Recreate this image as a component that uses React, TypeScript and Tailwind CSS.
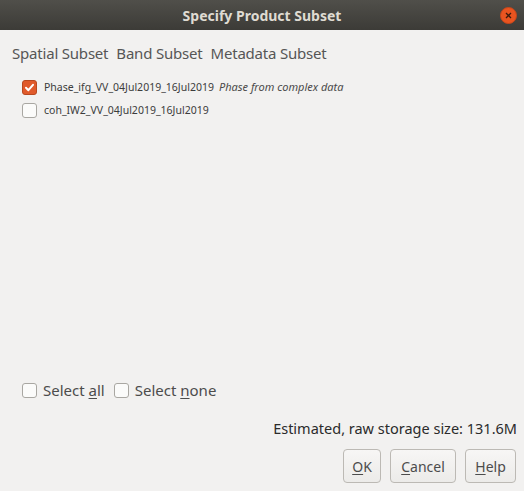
import React from "react";

const font = { fontFamily: '"Noto Sans", "Open Sans", sans-serif' };

function Check({ checked }: { checked?: boolean }) {
  if (checked) {
    return (
      <span className="w-[15px] h-[15px] rounded-[3px] bg-[#e05a2b] border border-[#b8481f] flex items-center justify-center shrink-0">
        <svg width="11" height="11" viewBox="0 0 11 11">
          <path d="M2 5.8 L4.4 8.2 L9 2.8" stroke="#fff" strokeWidth="2" fill="none" strokeLinecap="round" strokeLinejoin="round" />
        </svg>
      </span>
    );
  }
  return <span className="block w-[15px] h-[15px] rounded-[3px] bg-[#fbfbfa] border border-[#a9a7a2] shrink-0" />;
}

export default function App() {
  return (
    <div className="w-[524px] h-[491px] bg-[#f2f1f0] flex flex-col overflow-hidden" style={font}>
      <div className="h-[30px] bg-gradient-to-b from-[#504f4a] to-[#3c3b37] flex items-center justify-center relative shrink-0">
        <span className="text-[14px] font-bold text-[#dfdbd2]">Specify Product Subset</span>
        <span className="absolute right-[7px] top-[7px] w-[17px] h-[17px] rounded-full bg-[#e95420] border border-[#c7461a] flex items-center justify-center">
          <svg width="7" height="7" viewBox="0 0 7 7">
            <path d="M1 1 L6 6 M6 1 L1 6" stroke="#3c1a0c" strokeWidth="1.3" />
          </svg>
        </span>
      </div>
      <div className="flex gap-[8px] pl-[12px] pt-[13px] text-[15px] text-[#565656] leading-[20px] tracking-[-0.2px]">
        <span>Spatial Subset</span>
        <span>Band Subset</span>
        <span>Metadata Subset</span>
      </div>
      <div className="flex flex-col pl-[22px] pt-[17px] gap-[8px] text-[10.5px] text-[#3c3c3c]">
        <div className="flex items-center h-[15px]">
          <Check checked />
          <span className="ml-[7px]">Phase_ifg_VV_04Jul2019_16Jul2019</span>
          <span className="italic text-[#4a4a4a] ml-[5px] text-[11px]">Phase from complex data</span>
        </div>
        <div className="flex items-center h-[15px]">
          <Check />
          <span className="ml-[7px]">coh_IW2_VV_04Jul2019_16Jul2019</span>
        </div>
      </div>
      <div className="flex-1" />
      <div className="flex items-center pl-[22px] text-[15px] text-[#4c4c4c] h-[16px] mb-[20px]">
        <Check />
        <span className="ml-[6px]">Select <span className="underline underline-offset-2">a</span>ll</span>
        <span className="ml-[9px] flex"><Check /></span>
        <span className="ml-[6px]">Select <span className="underline underline-offset-2">n</span>one</span>
      </div>
      <div className="flex justify-end pr-[7px] text-[14.5px] text-[#2b2b2b] h-[20px] mb-[11px]">
        Estimated, raw storage size: 131.6M
      </div>
      <div className="flex justify-end gap-[9px] pr-[8px] mb-[8px] text-[14px] text-[#4c4c4c]">
        <button className="w-[38px] h-[34px] rounded-[4px] border border-[#bcb9b4] bg-gradient-to-b from-[#f7f6f5] to-[#ecebe9]">
          <span className="underline underline-offset-2">O</span>K
        </button>
        <button className="w-[66px] h-[34px] rounded-[4px] border border-[#bcb9b4] bg-gradient-to-b from-[#f7f6f5] to-[#ecebe9]">
          <span className="underline underline-offset-2">C</span>ancel
        </button>
        <button className="w-[51px] h-[34px] rounded-[4px] border border-[#bcb9b4] bg-gradient-to-b from-[#f7f6f5] to-[#ecebe9]">
          <span className="underline underline-offset-2">H</span>elp
        </button>
      </div>
    </div>
  );
}
